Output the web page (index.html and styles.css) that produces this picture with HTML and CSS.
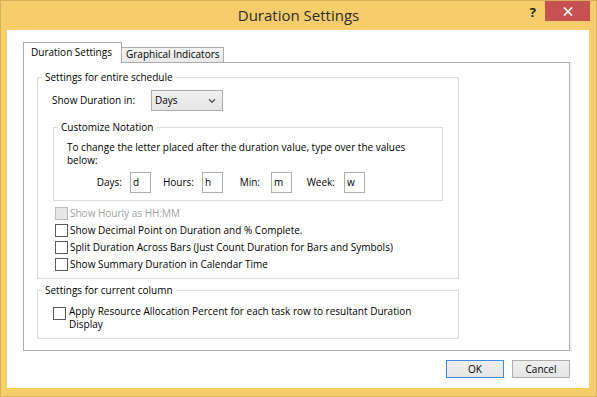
FILE: index.html
```html
<!DOCTYPE html>
<html>
<head>
<meta charset="utf-8">
<link rel="stylesheet" href="styles.css">
</head>
<body>
<div class="window">
  <div class="titlebar">
    <div class="title">Duration Settings</div>
    <div class="caption-buttons">
      <span class="help">?</span>
      <span class="close"><svg width="10" height="9" viewBox="0 0 10 9"><path d="M1 0.5 L9 8.5 M9 0.5 L1 8.5" stroke="#fff" stroke-width="1.7" fill="none"/></svg></span>
    </div>
  </div>
  <div class="client">
    <div class="tabs">
      <div class="tab active">Duration Settings</div>
      <div class="tab">Graphical Indicators</div>
    </div>
    <div class="panel">
      <fieldset class="group g1">
        <legend>Settings for entire schedule</legend>
        <div class="g1-inner">
          <div class="show-row">
            <span class="show-label">Show Duration in:</span>
            <div class="combo"><span>Days</span><svg width="8" height="6" viewBox="0 0 8 6"><path d="M1 1.2 L4 4.2 L7 1.2" stroke="#5a5a5a" stroke-width="1.5" fill="none"/></svg></div>
          </div>
          <fieldset class="group notation">
            <legend>Customize Notation</legend>
            <div class="notation-inner">
              <p class="hint">To change the letter placed after the duration value, type over the values<br>below:</p>
              <div class="letters">
                <span class="lbl l-days">Days:</span><span class="box b-days">d</span>
                <span class="lbl l-hours">Hours:</span><span class="box b-hours">h</span>
                <span class="lbl l-min">Min:</span><span class="box b-min">m</span>
                <span class="lbl l-week">Week:</span><span class="box b-week">w</span>
              </div>
            </div>
          </fieldset>
          <div class="checks">
            <div class="check disabled"><span class="cb"></span><span>Show Hourly as HH:MM</span></div>
            <div class="check"><span class="cb"></span><span>Show Decimal Point on Duration and % Complete.</span></div>
            <div class="check"><span class="cb"></span><span>Split Duration Across Bars (Just Count Duration for Bars and Symbols)</span></div>
            <div class="check"><span class="cb"></span><span>Show Summary Duration in Calendar Time</span></div>
          </div>
        </div>
      </fieldset>
      <fieldset class="group g2">
        <legend>Settings for current column</legend>
        <div class="g2-inner">
          <div class="check wrap"><span class="cb"></span><span>Apply Resource Allocation Percent for each task row to resultant Duration<br>Display</span></div>
        </div>
      </fieldset>
    </div>
    <div class="buttons">
      <div class="btn default">OK</div>
      <div class="btn">Cancel</div>
    </div>
  </div>
</div>
</body>
</html>
```
FILE: styles.css
```css
* { box-sizing: border-box; }
html, body { margin: 0; padding: 0; }
body {
  width: 597px;
  height: 397px;
  overflow: hidden;
  background: #f7cd6b;
  font-family: "Open Sans", "Noto Sans", sans-serif;
  font-size: 10px;
  line-height: 13px;
  color: #000;
}
.window {
  width: 597px;
  height: 397px;
  border: 1px solid #d9b05a;
  background: #f7cd6b;
  display: flex;
  flex-direction: column;
}
.titlebar {
  height: 29px;
  display: grid;
  grid-template-columns: 1fr auto 1fr;
  align-items: start;
}
.title {
  grid-column: 2;
  font-size: 15px;
  line-height: 20px;
  padding-top: 4px;
  color: #2b2b2b;
  white-space: nowrap;
}
.caption-buttons {
  grid-column: 3;
  display: flex;
  justify-content: flex-end;
  align-items: flex-start;
}
.help {
  font-size: 13px;
  font-weight: 700;
  line-height: 20px;
  color: #222;
  margin-right: 9px;
  padding-top: 1px;
}
.close {
  width: 45px;
  height: 20px;
  margin-right: 6px;
  background: #c75050;
  display: flex;
  align-items: center;
  justify-content: center;
}
.client {
  width: 582px;
  height: 358px;
  margin-left: 6px;
  background: #fff;
  padding: 12px 0 0 16px;
}
.tabs {
  height: 20px;
  display: flex;
  align-items: flex-end;
}
.tab {
  border: 1px solid #acacac;
  border-bottom: none;
  white-space: nowrap;
}
.tab.active {
  width: 99px;
  height: 21px;
  margin-bottom: -1px;
  position: relative;
  z-index: 1;
  background: #fff;
  padding: 3px 0 0 7px;
}
.tab:not(.active) {
  width: 102px;
  height: 15px;
  background: linear-gradient(#f2f2f2, #e9e9e9);
  border-left: none;
  padding: 0 0 0 4px;
}
.panel {
  width: 547px;
  height: 289px;
  border: 1px solid #acacac;
  box-shadow: 2px 0 0 #f2f2f2;
  padding: 8px 0 0 13px;
}
.group {
  margin: 0;
  padding: 0;
  border: 1px solid #dcdcdc;
  min-width: 0;
}
.group legend {
  padding: 0 3px;
  margin-left: 4px;
  line-height: 13px;
}
.g1 { width: 422px; }
.g1-inner { padding: 6px 0 5px 14px; }
.show-row {
  display: flex;
  align-items: center;
  height: 21px;
}
.show-label { width: 99px; }
.combo {
  width: 72px;
  height: 21px;
  border: 1px solid #acacac;
  background: linear-gradient(#f0f0f0, #e5e5e5);
  display: flex;
  align-items: center;
  justify-content: space-between;
  padding: 0 6px 0 3px;
}
.notation {
  width: 390px;
  margin: 10px 0 0 1px;
}
.notation-inner { padding: 7px 0 7px 13px; }
.hint { margin: 0; }
.letters {
  display: flex;
  align-items: center;
  height: 21px;
  margin-top: 5px;
}
.lbl { text-align: right; }
.l-days { width: 55px; }
.l-hours { width: 43px; }
.l-min { width: 37px; }
.l-week { width: 43px; }
.box {
  width: 21px;
  height: 21px;
  border: 1px solid #abadb3;
  padding: 3px 0 0 2px;
}
.b-days, .b-hours { margin-left: 8px; }
.b-min { margin-left: 11px; }
.b-week { margin-left: 9px; }
.checks { margin: 4px 0 0 3px; }
.check {
  display: flex;
  align-items: center;
  height: 17px;
}
.cb {
  width: 13px;
  height: 13px;
  border: 1px solid #5a5a5a;
  background: #fff;
  margin-right: 2px;
  flex: none;
}
.check.disabled { color: #a0a0a0; }
.check.disabled .cb {
  border-color: #bcbcbc;
  background: #e6e6e6;
}
.g2 { width: 422px; margin-top: 5px; }
.g2-inner { padding: 8px 0 7px 15px; }
.check.wrap {
  height: auto;
  align-items: flex-start;
}
.check.wrap .cb { margin-top: 2px; margin-right: 3px; }
.buttons {
  width: 547px;
  display: flex;
  justify-content: flex-end;
  gap: 8px;
  margin-top: 9px;
}
.btn {
  width: 58px;
  height: 18px;
  border: 1px solid #acacac;
  background: linear-gradient(#f0f0f0, #e5e5e5);
  text-align: center;
  line-height: 16px;
}
.btn.default { border-color: #3c8fdc; }
```
